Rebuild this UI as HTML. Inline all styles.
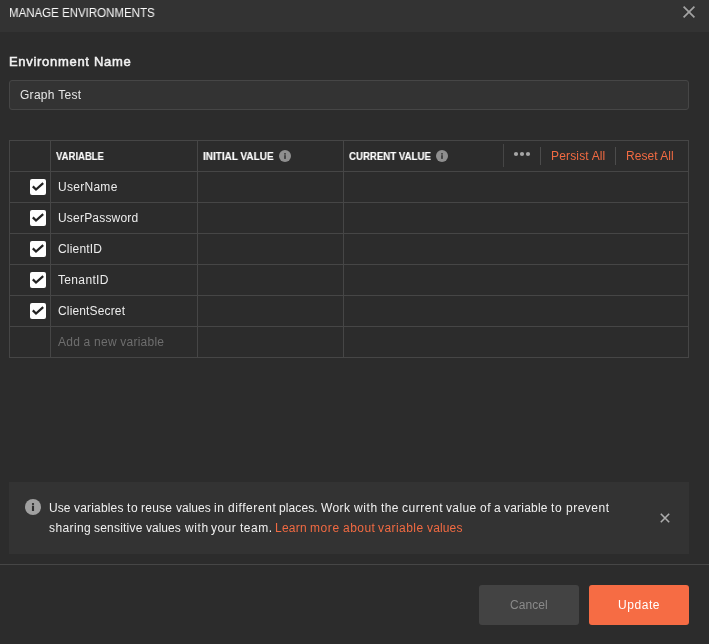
<!DOCTYPE html>
<html lang="en">
<head>
<meta charset="utf-8">
<title>Manage Environments</title>
<style>
*{box-sizing:border-box;margin:0;padding:0}
html,body{width:709px;height:644px;overflow:hidden;background:#2c2c2c}
body{position:relative;font-family:"Liberation Sans",sans-serif;color:#f0f0f0;font-size:12px}
.abs{position:absolute;white-space:nowrap;line-height:1;will-change:transform}
#hdr{position:absolute;left:0;top:0;width:709px;height:32px;background:#333333}
#title{left:9px;top:6.5px;font-size:12.5px;color:#fafafa}
#envlabel{left:9px;top:55px;font-size:13px;font-weight:normal;color:#f2f2f2;-webkit-text-stroke:0.5px #f2f2f2}
#envinput{position:absolute;left:9px;top:80px;width:680px;height:30px;border:1px solid #464646;border-radius:3px;background:#333}
#envval{left:20px;top:89px;font-size:12px;color:#e6e6e6}
.hl{position:absolute;height:1px;background:#464646}
.vl{position:absolute;width:1px;background:#464646}
.th{font-size:11px;font-weight:bold;color:#fff;-webkit-text-stroke:0.12px #fff}
.td{font-size:12px;color:#ececec}
.cb{position:absolute;left:30px;width:16px;height:16px;background:#fff;border-radius:2px}
.cb svg{position:absolute;left:0;top:0}
.lnk{font-size:12px;color:#f16a42}
.ii{position:absolute}
#info{position:absolute;left:9px;top:482px;width:680px;height:72px;background:#333333}
.it{font-size:12px;color:#f0f0f0}
.w{position:absolute;top:0;left:49px;white-space:nowrap}
.o{color:#f16a42}
.btn{position:absolute;top:585px;width:100px;height:40px;border-radius:3px}
#thvar{left:56px;top:151px}
#thini{left:203px;top:151px}
#thcur{left:349px;top:151px}
#persist{left:551px;top:150px}
#reset{left:626px;top:150px}
#r1{left:58px;top:181px}
#r2{left:58px;top:212px}
#r3{left:58px;top:243px}
#r4{left:58px;top:274px}
#r5{left:58px;top:305px}
#r6{left:58px;top:336px;color:#6e6e6e}
#l1{left:0;top:502px;width:709px;height:14px}
#l2{left:0;top:522px;width:709px;height:14px}
#cancel{left:510px;top:599px;font-size:12px;color:#8a8a8a}
#update{left:618px;top:599px;font-size:12px;color:#ffffff}
/*FIT*/
#title{left:9px;transform-origin:0 50%;transform:scaleX(0.9201)}
#envlabel{left:9px;letter-spacing:0.700px}
#envval{left:20px;letter-spacing:0.288px}
#thvar{left:56px;transform-origin:0 50%;transform:scaleX(0.8646)}
#thini{left:203px;transform-origin:0 50%;transform:scaleX(0.9072)}
#thcur{left:349px;transform-origin:0 50%;transform:scaleX(0.8781)}
#persist{left:551px;letter-spacing:0.160px}
#reset{left:626px;letter-spacing:0.050px}
#r1{left:58px;letter-spacing:0.280px}
#r2{left:58px;letter-spacing:0.200px}
#r3{left:58px;letter-spacing:0.180px}
#r4{left:58px;letter-spacing:0.339px}
#r5{left:58px;letter-spacing:0.151px}
#r6{left:58px;letter-spacing:0.230px}
#cancel{left:510px;letter-spacing:0.046px}
#update{left:618px;letter-spacing:0.565px}
#a0{left:49px;letter-spacing:0.000px}
#a1{left:74px;letter-spacing:0.174px}
#a2{left:127px;letter-spacing:0.600px}
#a3{left:141px;letter-spacing:0.242px}
#a4{left:176px;letter-spacing:0.000px}
#a5{left:214px;letter-spacing:0.600px}
#a6{left:228px;letter-spacing:0.575px}
#a7{left:279px;letter-spacing:0.105px}
#a8{left:321px;letter-spacing:0.383px}
#a9{left:354px;letter-spacing:0.600px}
#a10{left:381px;letter-spacing:0.386px}
#a11{left:402px;letter-spacing:0.541px}
#a12{left:446px;letter-spacing:0.362px}
#a13{left:480px;letter-spacing:0.600px}
#a14{left:494px;letter-spacing:0.000px}
#a15{left:504px;letter-spacing:0.201px}
#a16{left:551px;letter-spacing:0.600px}
#a17{left:566px;letter-spacing:0.491px}
#b0{left:49px;letter-spacing:0.402px}
#b1{left:94px;letter-spacing:0.202px}
#b2{left:146px;letter-spacing:0.000px}
#b3{left:185px;letter-spacing:0.600px}
#b4{left:211px;letter-spacing:0.429px}
#b5{left:240px;letter-spacing:0.535px}
#b6{left:275px;letter-spacing:0.245px}
#b7{left:310px;letter-spacing:0.600px}
#b8{left:343px;letter-spacing:0.480px}
#b9{left:378px;letter-spacing:0.445px}
#b10{left:427px;letter-spacing:0.144px}
/*ENDFIT*/
</style>
</head>
<body>
<div id="hdr"></div>
<span class="abs" id="title">MANAGE ENVIRONMENTS</span>
<svg class="ii" style="left:681px;top:4px" width="16" height="16" viewBox="0 0 16 16"><path d="M2.6 2.6 L13.4 13.4 M13.4 2.6 L2.6 13.4" stroke="#a3a3a3" stroke-width="1.7" fill="none"/></svg>

<span class="abs" id="envlabel">Environment Name</span>
<div id="envinput"></div>
<span class="abs" id="envval">Graph Test</span>

<!-- table grid -->
<div class="hl" style="left:9px;top:140px;width:680px"></div>
<div class="hl" style="left:9px;top:171px;width:680px"></div>
<div class="hl" style="left:9px;top:202px;width:680px"></div>
<div class="hl" style="left:9px;top:233px;width:680px"></div>
<div class="hl" style="left:9px;top:264px;width:680px"></div>
<div class="hl" style="left:9px;top:295px;width:680px"></div>
<div class="hl" style="left:9px;top:326px;width:680px"></div>
<div class="hl" style="left:9px;top:357px;width:680px"></div>
<div class="vl" style="left:9px;top:140px;height:218px"></div>
<div class="vl" style="left:50px;top:140px;height:218px"></div>
<div class="vl" style="left:197px;top:140px;height:218px"></div>
<div class="vl" style="left:343px;top:140px;height:218px"></div>
<div class="vl" style="left:688px;top:140px;height:218px"></div>
<div class="vl" style="left:503px;top:144px;height:23px"></div>
<div class="vl" style="left:540px;top:147px;height:18px;background:#4c4c4c"></div>
<div class="vl" style="left:615px;top:147px;height:18px;background:#4c4c4c"></div>

<span id="thvar" class="abs th">VARIABLE</span>
<span id="thini" class="abs th">INITIAL VALUE</span>
<span id="thcur" class="abs th">CURRENT VALUE</span>
<svg class="ii" style="left:279px;top:150px" width="12" height="12" viewBox="0 0 12 12"><circle cx="6" cy="6" r="6" fill="#8f8f8f"/><rect x="5.15" y="5.2" width="1.7" height="3.7" fill="#3a3a3a"/><rect x="5.15" y="3.1" width="1.7" height="1.5" fill="#3a3a3a"/></svg>
<svg class="ii" style="left:436px;top:150px" width="12" height="12" viewBox="0 0 12 12"><circle cx="6" cy="6" r="6" fill="#8f8f8f"/><rect x="5.15" y="5.2" width="1.7" height="3.7" fill="#3a3a3a"/><rect x="5.15" y="3.1" width="1.7" height="1.5" fill="#3a3a3a"/></svg>
<svg class="ii" style="left:513px;top:151px" width="18" height="6" viewBox="0 0 18 6"><circle cx="3" cy="3" r="2.1" fill="#a6a6a6"/><circle cx="9" cy="3" r="2.1" fill="#a6a6a6"/><circle cx="15" cy="3" r="2.1" fill="#a6a6a6"/></svg>
<span id="persist" class="abs lnk">Persist All</span>
<span id="reset" class="abs lnk">Reset All</span>

<div class="cb" style="top:179px"><svg width="16" height="16" viewBox="0 0 16 16"><path d="M2.8 7.4 L6 10.6 L13.2 4.1" stroke="#222" stroke-width="2.2" fill="none"/></svg></div>
<div class="cb" style="top:210px"><svg width="16" height="16" viewBox="0 0 16 16"><path d="M2.8 7.4 L6 10.6 L13.2 4.1" stroke="#222" stroke-width="2.2" fill="none"/></svg></div>
<div class="cb" style="top:241px"><svg width="16" height="16" viewBox="0 0 16 16"><path d="M2.8 7.4 L6 10.6 L13.2 4.1" stroke="#222" stroke-width="2.2" fill="none"/></svg></div>
<div class="cb" style="top:272px"><svg width="16" height="16" viewBox="0 0 16 16"><path d="M2.8 7.4 L6 10.6 L13.2 4.1" stroke="#222" stroke-width="2.2" fill="none"/></svg></div>
<div class="cb" style="top:303px"><svg width="16" height="16" viewBox="0 0 16 16"><path d="M2.8 7.4 L6 10.6 L13.2 4.1" stroke="#222" stroke-width="2.2" fill="none"/></svg></div>

<span id="r1" class="abs td">UserName</span>
<span id="r2" class="abs td">UserPassword</span>
<span id="r3" class="abs td">ClientID</span>
<span id="r4" class="abs td">TenantID</span>
<span id="r5" class="abs td">ClientSecret</span>
<span id="r6" class="abs td">Add a new variable</span>

<div id="info"></div>
<svg class="ii" style="left:25px;top:499px" width="16" height="16" viewBox="0 0 16 16"><circle cx="8" cy="8" r="8" fill="#a0a0a0"/><rect x="6.95" y="6.7" width="2.1" height="5.3" fill="#2e2e2e"/><rect x="6.95" y="4.1" width="2.1" height="1.8" fill="#2e2e2e"/></svg>
<div id="l1" class="abs it"><span id="a0" class="w">Use</span> <span id="a1" class="w">variables</span> <span id="a2" class="w">to</span> <span id="a3" class="w">reuse</span> <span id="a4" class="w">values</span> <span id="a5" class="w">in</span> <span id="a6" class="w">different</span> <span id="a7" class="w">places.</span> <span id="a8" class="w">Work</span> <span id="a9" class="w">with</span> <span id="a10" class="w">the</span> <span id="a11" class="w">current</span> <span id="a12" class="w">value</span> <span id="a13" class="w">of</span> <span id="a14" class="w">a</span> <span id="a15" class="w">variable</span> <span id="a16" class="w">to</span> <span id="a17" class="w">prevent</span></div>
<div id="l2" class="abs it"><span id="b0" class="w">sharing</span> <span id="b1" class="w">sensitive</span> <span id="b2" class="w">values</span> <span id="b3" class="w">with</span> <span id="b4" class="w">your</span> <span id="b5" class="w">team.</span> <span id="b6" class="w o">Learn</span> <span id="b7" class="w o">more</span> <span id="b8" class="w o">about</span> <span id="b9" class="w o">variable</span> <span id="b10" class="w o">values</span></div>
<svg class="ii" style="left:659px;top:512px" width="12" height="12" viewBox="0 0 12 12"><path d="M1.8 1.8 L10.2 10.2 M10.2 1.8 L1.8 10.2" stroke="#adadad" stroke-width="1.6" fill="none"/></svg>

<div class="hl" style="left:0;top:564px;width:709px"></div>
<div class="btn" style="left:479px;background:#434343"></div>
<div class="btn" style="left:589px;background:#f66c44"></div>
<span id="cancel" class="abs">Cancel</span>
<span id="update" class="abs">Update</span>
</body>
</html>
